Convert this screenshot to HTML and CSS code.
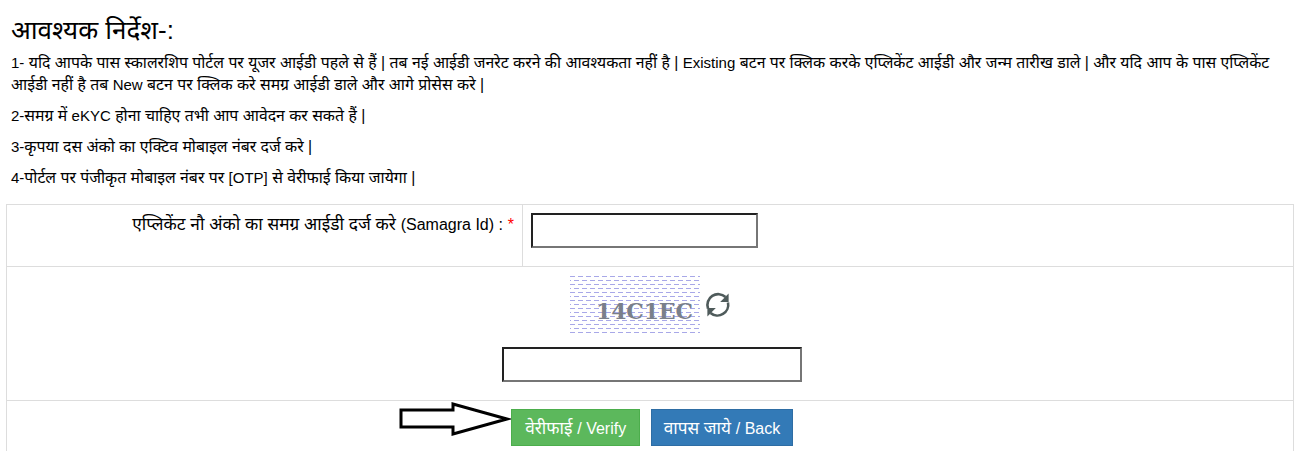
FILE: index.html
```html
<!DOCTYPE html>
<html lang="hi">
<head>
    <meta charset="UTF-8">
    <title>आवश्यक निर्देश</title>
    <link rel="stylesheet" href="styles.css">
</head>
<body>
    <!-- निर्देश -->
    <div class="notes">
        <h3>आवश्यक निर्देश-:</h3>
        <p><span class="en">1-</span> यदि आपके पास स्कालरशिप पोर्टल पर यूजर आईडी पहले से हैं | तब नई आईडी जनरेट करने की आवश्यकता नहीं है | <span class="en">Existing</span> बटन पर क्लिक करके एप्लिकेंट आईडी और जन्म तारीख डाले | और यदि आप के पास एप्लिकेंट आईडी नहीं है तब <span class="en">New</span> बटन पर क्लिक करे समग्र आईडी डाले और आगे प्रोसेस करे |</p>
        <p><span class="en">2-</span>समग्र में <span class="en">eKYC</span> होना चाहिए तभी आप आवेदन कर सकते हैं |</p>
        <p><span class="en">3-</span>कृपया दस अंको का एक्टिव मोबाइल नंबर दर्ज करे |</p>
        <p><span class="en">4-</span>पोर्टल पर पंजीकृत मोबाइल नंबर पर <span class="en">[OTP]</span> से वेरीफाई किया जायेगा |</p>
    </div>

    <table class="frm">
        <tr class="row1">
            <td class="lbl">एप्लिकेंट नौ अंको का समग्र आईडी दर्ज करे <span class="en">(Samagra Id) :</span> <span class="req">*</span></td>
            <td class="val"><input type="text" class="txt"></td>
        </tr>
        <tr class="row2">
            <td colspan="2">
                <div class="cap">
                    <svg class="capimg" width="130" height="58" viewBox="0 0 130 58">
                        <defs>
                            <pattern id="dash" width="8" height="8" patternUnits="userSpaceOnUse">
                                <rect x="0" y="0" width="5" height="1" fill="#a8a8e8"/>
                                <rect x="4" y="4" width="5" height="1" fill="#a8a8e8"/>
                                <rect x="-4" y="4" width="5" height="1" fill="#a8a8e8"/>
                            </pattern>
                        </defs>
                        <rect width="130" height="58" fill="url(#dash)"/>
                        <text x="26" y="43" textLength="97" class="captxt">14C1EC</text>
                    </svg>
                    <!-- refresh -->
                    <svg class="refresh" width="28" height="28" viewBox="0 0 28 28">
                        <path d="M4 17.5A10.8 10.8 0 0 1 21.5 6" fill="none" stroke="#4f5b5b" stroke-width="2.6"/>
                        <path d="M24.6 2.5V11H16.2Z" fill="#4f5b5b"/>
                        <path d="M24 11.5A10.8 10.8 0 0 1 6.5 22" fill="none" stroke="#4f5b5b" stroke-width="2.6"/>
                        <path d="M3.4 25.5V17H11.8Z" fill="#4f5b5b"/>
                    </svg>
                </div>
                <input type="text" class="txt txt2">
            </td>
        </tr>
        <tr class="row3">
            <td colspan="2">
                <div class="btns">
                    <!-- 화살표 -->
                    <svg class="arrow" width="112" height="34" viewBox="0 0 112 34">
                        <path d="M2 8H54V2L108 17L54 32V25H2Z" fill="#fff" stroke="#000" stroke-width="3"/>
                    </svg>
                    <button class="btn green">वेरीफाई <span class="en">/ Verify</span></button>
                    <button class="btn blue">वापस जाये <span class="en">/ Back</span></button>
                </div>
            </td>
        </tr>
    </table>
</body>
</html>
```

FILE: styles.css
```css
*{
    box-sizing: border-box;
}

body{
    margin: 0;
    overflow: hidden;
    color: #000;
    background: #fff;
    font-family: "Liberation Sans", "Noto Sans", sans-serif;
    font-size: 15.8px;
    line-height: 22px;
}

/* 상단 안내 */
.notes{
    padding: 0 12px 0 11px;
}

.notes h3{
    margin: 0;
    padding-top: 15px;
    font-size: 26px;
    font-weight: normal;
    line-height: 30px;
}

.notes p{
    margin: 0 0 9px;
}

.notes h3 + p{
    margin-top: 7px;
}

.notes .en{
    font-size: 15px;
}

/* 폼 테이블 */
.frm{
    width: 1288px;
    margin: 15px 0 0 6px;
    border-collapse: collapse;
}

.frm td{
    border: 1px solid #ddd;
    padding: 8px;
    vertical-align: top;
    text-align: center;
}

.frm .lbl{
    width: 516px;
    text-align: right;
    font-size: 17.3px;
}

.lbl .en,
.req{
    font-size: 16px;
}

.frm .val{
    text-align: left;
}

.req{
    color: #f00;
}

.row1{
    height: 62px;
}

.row2{
    height: 134px;
}

.row3{
    height: 60px;
}

.frm .row2 td,
.frm .row3 td{
    padding-left: 12px;
}

.txt{
    display: block;
    width: 227px;
    height: 35px;
    border: 2px solid;
    border-color: #222 #767676 #767676 #222;
    background: #fff;
}

.txt2{
    width: 300px;
    margin: 13px auto 0;
}

/* 캡차 */
.cap{
    display: flex;
    justify-content: center;
    align-items: center;
    padding: 1px 2px 0 0;
}

.captxt{
    font-family: "DejaVu Serif", serif;
    font-size: 22px;
    font-weight: bold;
    fill: #7a808a;
}

.refresh{
    margin-left: 4px;
}

/* 버튼 */
.btns{
    position: relative;
    display: flex;
    justify-content: center;
    gap: 11px;
}

.arrow{
    position: absolute;
    left: 380px;
    top: -7px;
}

.btn{
    height: 37px;
    border: 1px solid;
    color: #fff;
    font-family: inherit;
    font-size: 17.2px;
}

.btn .en{
    font-size: 16px;
}

.green{
    padding: 4px 13px;
    background: #5cb85c;
    border-color: #4cae4c;
}

.blue{
    padding: 4px 11.5px;
    background: #337ab7;
    border-color: #2e6da4;
}
```
